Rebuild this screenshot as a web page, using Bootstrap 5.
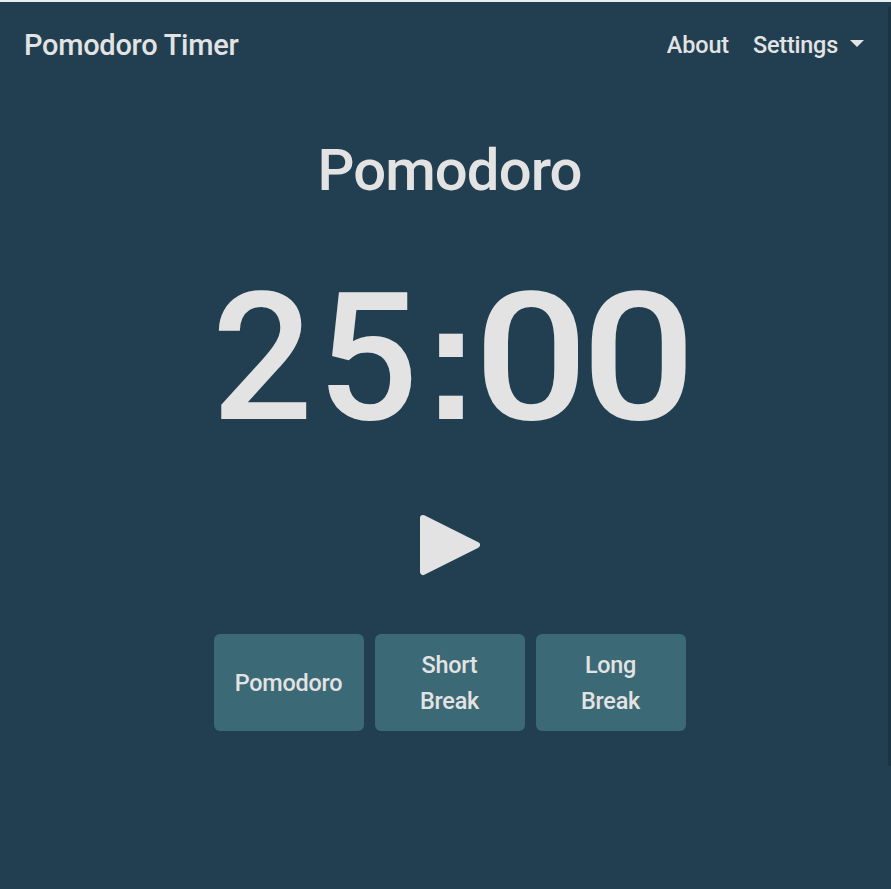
<!DOCTYPE html>
<html lang="en">
<head>
<meta charset="utf-8">
<meta name="viewport" content="width=device-width, initial-scale=1">
<title>Pomodoro Timer</title>
<link href="https://cdn.jsdelivr.net/npm/bootstrap@5.3.0/dist/css/bootstrap.min.css" rel="stylesheet">
<style>
  body { background: #213f51; color: #e3e3e3; font-family: Roboto, "Open Sans", sans-serif; font-weight: 500; font-size: 23.4px; line-height: 36px; height: 889px; border-top: 2px solid #e9eef0; }
  .topbar { height: 86px; padding: 0 27px 0 24px; }
  .topbar .navbar-brand { color: inherit; font-size: 29px; line-height: 44px; padding: 0; letter-spacing: -.28px; }
  .topbar .navbar-nav .nav-link { color: inherit; padding: 0; }
  .topbar .navbar-nav .about-link { letter-spacing: -.1px; }
  .topbar .navbar-nav .dropdown-toggle { letter-spacing: -.2px; }
  .topbar .dropdown-toggle::after { margin-left: 12px; border-top-width: 7px; border-right-width: 7px; border-left-width: 7px; vertical-align: 6px; }
  .mode-title { font-size: 58px; line-height: 72px; font-weight: 500; margin-top: 46px; letter-spacing: -.9px; }
  .clock { font-size: 178px; line-height: 220px; margin-top: 42px; padding-right: 9px; letter-spacing: 4.5px; white-space: nowrap; }
  .clock-colon { font-family: "Liberation Sans", sans-serif; font-weight: 700; font-size: 168px; line-height: 1; letter-spacing: -5px; }
  .clock-seconds { letter-spacing: -6px; transform: scaleX(1.13); transform-origin: left; margin-right: 14px; }
  .play { margin-top: 46px; width: 62px; height: 62px; }
  .modes { gap: 11px; margin-top: 58px; }
  .mode-btn { width: 150px; height: 97px; background: #3c6976; color: inherit; border: 0; border-radius: 6px; font: inherit; padding: 12px 20px; letter-spacing: -.25px; }
  .scroll-thumb { right: 0; top: 4px; width: 3px; height: 760px; background: #1b3443; border-radius: 3px 0 0 3px; }
</style>
</head>
<body class="position-relative overflow-hidden">
<nav class="topbar navbar navbar-expand d-flex justify-content-between align-items-center">
  <a class="navbar-brand" href="#">Pomodoro Timer</a>
  <div class="navbar-nav gap-4">
    <a class="nav-link about-link" href="#">About</a>
    <a class="nav-link dropdown-toggle" href="#" role="button" data-bs-toggle="dropdown">Settings</a>
  </div>
</nav>
<main class="d-flex flex-column align-items-center ps-2">
  <h1 class="mode-title mb-0">Pomodoro</h1>
  <div class="clock">25<span class="clock-colon">:</span><span class="clock-seconds d-inline-block">00</span></div>
  <button class="play btn p-0 border-0 d-flex" aria-label="Start">
    <svg width="62" height="62" viewBox="0 0 62 62"><path d="M4 4 58 31 4 58Z" fill="#e3e3e3" stroke="#e3e3e3" stroke-width="6" stroke-linejoin="round"/></svg>
  </button>
  <div class="modes d-flex">
    <button class="mode-btn btn">Pomodoro</button>
    <button class="mode-btn btn">Short<br>Break</button>
    <button class="mode-btn btn">Long<br>Break</button>
  </div>
</main>
<div class="scroll-thumb position-absolute"></div>
<script src="https://cdn.jsdelivr.net/npm/bootstrap@5.3.0/dist/js/bootstrap.bundle.min.js"></script>
</body>
</html>
